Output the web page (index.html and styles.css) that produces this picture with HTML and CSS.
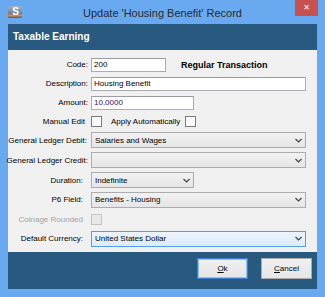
FILE: index.html
```html
<!DOCTYPE html>
<html lang="en">
<head>
    <meta charset="UTF-8">
    <title>Update 'Housing Benefit' Record</title>
    <link rel="stylesheet" href="styles.css">
</head>
<body>
    <div class="window">
        <div class="titlebar">
            <div class="title-left">
                <svg class="app-icon" width="14" height="12" viewBox="0 0 14 12">
                    <defs>
                        <linearGradient id="ig" x1="0" y1="0" x2="0" y2="1">
                            <stop offset="0" stop-color="#9fb4c8"/>
                            <stop offset="1" stop-color="#4d6580"/>
                        </linearGradient>
                    </defs>
                    <rect x="0" y="0" width="14" height="12" rx="1.5" fill="url(#ig)"/>
                    <rect x="0" y="8.5" width="14" height="2" fill="#f08a24"/>
                    <text x="7.5" y="9" font-family="Liberation Sans, sans-serif" font-size="10" font-weight="bold" fill="#fff" text-anchor="middle">S</text>
                </svg>
            </div>
            <div class="title">Update 'Housing Benefit' Record</div>
            <div class="title-right">
                <div class="close-btn">&#x2715;</div>
            </div>
        </div>

        <div class="panel">
            <div class="panel-header">Taxable Earning</div>

            <div class="form">
                <div class="label">Code:</div>
                <div class="field">
                    <input class="text w-code" type="text" value="200">
                    <span class="tx-type">Regular Transaction</span>
                </div>

                <div class="label">Description:</div>
                <div class="field">
                    <input class="text w-full" type="text" value="Housing Benefit">
                </div>

                <div class="label">Amount:</div>
                <div class="field">
                    <input class="text w-half amount" type="text" value="10.0000">
                </div>

                <div class="label pad-3">Manual Edit</div>
                <div class="field">
                    <span class="check"></span>
                    <span class="check-label">Apply Automatically</span>
                    <span class="check"></span>
                </div>

                <div class="label pad-1">General Ledger Debit:</div>
                <div class="field">
                    <div class="combo w-full">Salaries and Wages<svg class="chev" width="7" height="5" viewBox="0 0 7 5"><path d="M0.5 1 L3.5 4 L6.5 1" fill="none" stroke="#444" stroke-width="1.2"/></svg></div>
                </div>

                <div class="label">General Ledger Credit:</div>
                <div class="field">
                    <div class="combo w-full"><svg class="chev" width="7" height="5" viewBox="0 0 7 5"><path d="M0.5 1 L3.5 4 L6.5 1" fill="none" stroke="#444" stroke-width="1.2"/></svg></div>
                </div>

                <div class="label pad-5">Duration:</div>
                <div class="field">
                    <div class="combo w-half">Indefinite<svg class="chev" width="7" height="5" viewBox="0 0 7 5"><path d="M0.5 1 L3.5 4 L6.5 1" fill="none" stroke="#444" stroke-width="1.2"/></svg></div>
                </div>

                <div class="label pad-5">P6 Field:</div>
                <div class="field">
                    <div class="combo w-full">Benefits - Housing<svg class="chev" width="7" height="5" viewBox="0 0 7 5"><path d="M0.5 1 L3.5 4 L6.5 1" fill="none" stroke="#444" stroke-width="1.2"/></svg></div>
                </div>

                <div class="label pad-5 disabled">Coinage Rounded</div>
                <div class="field">
                    <span class="check is-disabled"></span>
                </div>

                <div class="label pad-5">Default Currency:</div>
                <div class="field">
                    <div class="combo w-full focused">United States Dollar<svg class="chev" width="7" height="5" viewBox="0 0 7 5"><path d="M0.5 1 L3.5 4 L6.5 1" fill="none" stroke="#444" stroke-width="1.2"/></svg></div>
                </div>
            </div>

            <div class="footer">
                <button class="btn default"><u>O</u>k</button>
                <button class="btn"><u>C</u>ancel</button>
            </div>
        </div>
    </div>
</body>
</html>
```

FILE: styles.css
```css
body {
    margin: 0;
    font-family: 'Liberation Sans', Arial, sans-serif;
    background-color: #69a9ef;
}
.window {
    width: 325px;
    height: 297px;
    display: flex;
    flex-direction: column;
    background-color: #69a9ef;
}
.titlebar {
    height: 24px;
    display: grid;
    grid-template-columns: 1fr auto 1fr;
    align-items: start;
}
.app-icon {
    display: block;
    margin: 6px 0 0 8px;
}
.title {
    font-size: 11px;
    color: #2b2b2b;
    line-height: 14px;
    padding-top: 6px;
}
.title-right {
    display: flex;
    justify-content: flex-end;
}
.close-btn {
    width: 23px;
    height: 16px;
    margin-right: 7px;
    background-color: #c75050;
    color: white;
    font-size: 8px;
    font-weight: bold;
    text-align: center;
    line-height: 16px;
    font-family: 'DejaVu Sans', sans-serif;
}
.panel {
    flex: 1;
    margin: 0 8px 8px;
    background-color: #285a7f;
    display: flex;
    flex-direction: column;
}
.panel-header {
    height: 26px;
    line-height: 26px;
    padding-left: 5px;
    color: white;
    font-weight: bold;
    font-size: 10px;
}
.form {
    height: 202px;
    box-sizing: border-box;
    padding: 5px 11px 0 0;
    background-color: #f0f0f0;
    display: grid;
    grid-template-columns: 80px 1fr;
    grid-template-rows: 19px 19px 19px 18px 20px 20px 20px 19px 20px 19px;
    column-gap: 3px;
    font-size: 8px;
    color: #000;
}
.label {
    display: flex;
    align-items: center;
    justify-content: flex-end;
    white-space: nowrap;
}
.pad-1 { padding-right: 1px; }
.pad-3 { padding-right: 3px; }
.pad-5 { padding-right: 5px; }
.label.disabled {
    color: #a3a3a3;
}
.field {
    display: flex;
    align-items: center;
}
.text {
    height: 14px;
    box-sizing: border-box;
    border: 1px solid #abadb3;
    border-top-color: #9a9ca3;
    background-color: white;
    padding: 0 2px;
    font-family: inherit;
    font-size: 8px;
    color: #000;
    margin: 0;
    outline: none;
}
.amount {
    color: #3d0a5c;
}
.w-code { width: 75px; }
.w-half { width: 103px; }
.w-full { width: 215px; }
.tx-type {
    margin-left: 15px;
    font-weight: bold;
    font-size: 9px;
}
.check {
    width: 11px;
    height: 11px;
    box-sizing: border-box;
    border: 1px solid #7a7a7a;
    background-color: white;
}
.check.is-disabled {
    border-color: #c4c4c4;
    background-color: #e8e8e8;
}
.check-label {
    margin: 0 5px 0 9px;
}
.combo {
    height: 16px;
    box-sizing: border-box;
    border: 1px solid #acacac;
    background: linear-gradient(#f2f2f2, #e5e5e5);
    padding: 0 3px 0 3px;
    display: flex;
    align-items: center;
    justify-content: space-between;
}
.combo.focused {
    border-color: #569de5;
    background: linear-gradient(#ecf4fc, #dcecfc);
}
.chev {
    margin-left: auto;
}
.footer {
    flex: 1;
    display: flex;
    justify-content: flex-end;
    align-items: flex-start;
    gap: 13px;
    padding: 6px 5px 0 0;
}
.btn {
    width: 51px;
    height: 21px;
    border: 1px solid #acacac;
    background: linear-gradient(#f0f0f0, #e5e5e5);
    font-family: inherit;
    font-size: 8px;
    color: #000;
    padding: 0;
}
.btn.default {
    border-color: #3c7fd1;
    box-shadow: inset 0 0 0 1px #8fc1f5;
}
```
